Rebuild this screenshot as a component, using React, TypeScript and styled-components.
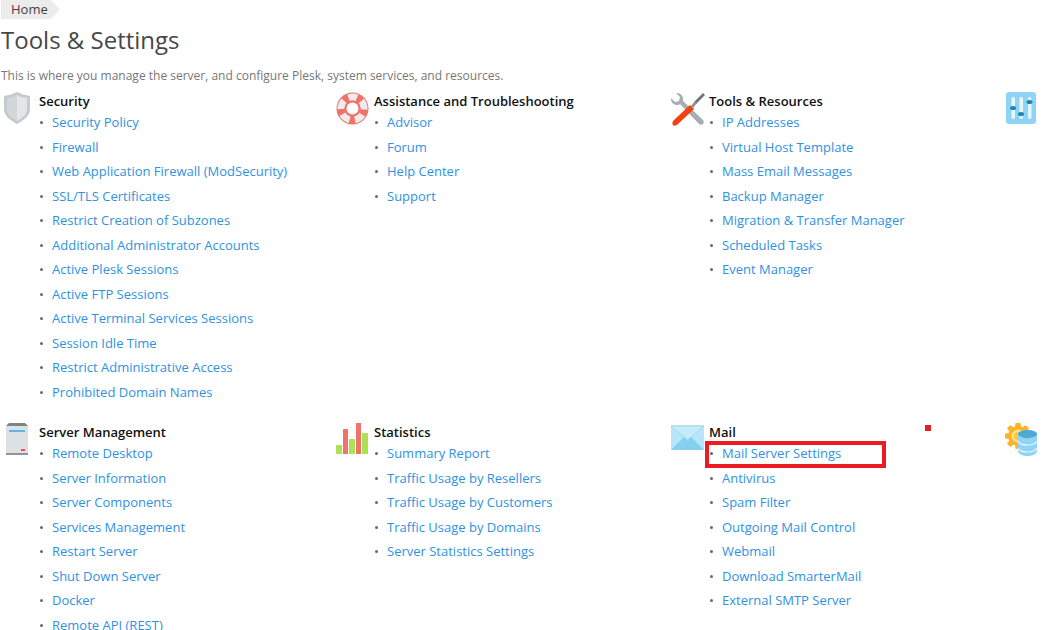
import React from "react";
import styled, { createGlobalStyle } from "styled-components";

const Global = createGlobalStyle`
  html, body { margin: 0; padding: 0; background: #fff; height: 630px; overflow: hidden; }
  body { font-family: "Open Sans", "Liberation Sans", sans-serif; font-size: 13px; }
`;
const Page = styled.div`position: relative; width: 1044px; height: 630px; overflow: hidden;`;
const Crumb = styled.div`
  box-sizing: border-box; width: 60px; height: 19px; margin-left: 1px; padding-left: 10px;
  background: #ececec; clip-path: polygon(0 0, 50px 0, 59px 9.5px, 50px 19px, 0 19px);
  font-size: 13px; line-height: 19px; color: #4a3f3f;
`;
const Title = styled.h1`
  margin: 3px 0 0 1px; font-size: 24px; font-weight: 400; line-height: 36px; color: #474747;
`;
const Desc = styled.p`
  margin: 9px 0 0 1px; font-size: 12px; line-height: 18px; color: #777;
`;
const Grid = styled.div`
  display: grid; grid-template-columns: repeat(4, 335px); row-gap: 18px; margin-top: 6px;
`;
const Section = styled.section`display: flex; align-items: flex-start;`;
const IconBox = styled.div<{ $left: number; $top?: number }>`
  width: 39px; flex: none; height: 40px; box-sizing: border-box;
  padding: ${(p) => p.$top ?? 1}px 0 0 ${(p) => p.$left}px;
  svg { display: block; overflow: visible; }
`;
const Body = styled.div`min-width: 0;`;
const Heading = styled.h2`
  margin: 0; font-size: 13px; font-weight: 600; line-height: 20px; color: #111;
`;
const List = styled.ul`margin: -1px 0 0; padding: 0; list-style: none;`;
const Item = styled.li`
  display: flex; height: 24.5px; line-height: 24.5px; white-space: nowrap;
  &::before { content: ""; width: 3px; height: 3px; margin: 11px 9px 0 1px; border-radius: 50%; background: #667; flex: none; }
`;
const LinkText = styled.a`font-size: 13px; color: #2f92e0; text-decoration: none;`;
const Highlight = styled.div`
  position: absolute; left: 705px; top: 441px; width: 181px; height: 27px;
  box-sizing: border-box; border: 4px solid #ed1c24;
`;
const Dot = styled.div`
  position: absolute; left: 925px; top: 425px; width: 6px; height: 6px; background: #ed1c24;
`;

const Shield = () => (
  <svg width="30" height="34" viewBox="0 0 30 34">
    <path d="M2 4C7 3 11 2 15 0c4 2 8 3 13 4v13c0 7-6 11-13 15C8 28 2 24 2 17z" fill="#c4cacd" />
    <path d="M15 3c3 2 7 2 10 3v11c0 6-5 9-10 12z" fill="#e2e6e9" />
    <path d="M15 3c-3 2-7 2-10 3v11c0 6 5 9 10 12z" fill="#d2d7da" />
  </svg>
);
const Ring = () => (
  <svg width="33" height="33" viewBox="0 0 33 33">
    <circle cx="16.5" cy="16.5" r="16" fill="#f0736a" />
    <circle cx="16.5" cy="16.5" r="11.5" fill="none" stroke="#ececec" strokeWidth="7" strokeDasharray="9 5.45" strokeDashoffset="4.5" transform="rotate(-90 16.5 16.5)" />
    <circle cx="16.5" cy="16.5" r="8" fill="#f0736a" />
    <circle cx="16.5" cy="16.5" r="6" fill="#fff" />
  </svg>
);
const Tools = () => (
  <svg width="34" height="34" viewBox="0 0 34 34">
    <path d="M6 1l-1 0 4 4-1 4-4 1-4-4C0 10 2 13 6 13c1 0 2 0 3-1l19 20c1 1 3 1 4 0s1-3 0-4L12 9c1-4-2-8-6-8z" fill="#a7aeb2" />
    <path d="M32 1l2 2-9 9-2-2z" fill="#6c7378" />
    <path d="M24 9l2 2-4 5-2-2z" fill="#8b9296" />
    <path d="M19 13l4 4L7 32c-2 2-4 2-5 1s-1-3 1-5z" fill="#f0420f" />
  </svg>
);
const Sliders = () => (
  <svg width="30" height="32" viewBox="0 0 30 32">
    <rect width="30" height="32" rx="3" fill="#8fd4f4" />
    <rect x="5.5" y="5" width="3.5" height="22" rx="1.7" fill="#e6f6fd" />
    <rect x="13.5" y="5" width="3.5" height="22" rx="1.7" fill="#e6f6fd" />
    <rect x="22" y="5" width="3.5" height="22" rx="1.7" fill="#e6f6fd" />
    <ellipse cx="7" cy="16" rx="3" ry="2" fill="#1a86b8" />
    <ellipse cx="15" cy="22" rx="3" ry="2" fill="#1a86b8" />
    <ellipse cx="23.5" cy="10" rx="3" ry="2" fill="#1a86b8" />
  </svg>
);
const Server = () => (
  <svg width="22" height="32" viewBox="0 0 22 32">
    <path d="M3 0h16l3 3v29H0V3z" fill="#dde1e4" />
    <path d="M3 0h16l3 3H0z" fill="#7d8488" />
    <rect y="30" width="22" height="2" fill="#8f969a" />
    <rect x="3" y="7" width="16" height="2" fill="#5bb8e8" />
    <rect x="15" y="26" width="4" height="2" fill="#f0504a" />
  </svg>
);
const Chart = () => (
  <svg width="33" height="32" viewBox="0 0 33 32">
    <rect x="0" y="22" width="6" height="9" rx="0.5" fill="#aee053" />
    <rect x="7" y="6" width="5" height="25" rx="0.5" fill="#f0736a" />
    <rect x="13" y="16" width="6" height="15" rx="0.5" fill="#aee053" />
    <rect x="20" y="0" width="5" height="31" rx="0.5" fill="#f0736a" />
    <rect x="26" y="10" width="6" height="21" rx="0.5" fill="#aee053" />
  </svg>
);
const Envelope = () => (
  <svg width="33" height="25" viewBox="0 0 33 25">
    <rect width="33" height="25" rx="1.5" fill="#b7e5f9" />
    <path d="M0 25l13-13h7l13 13z" fill="#83d0f1" />
    <path d="M0 1l16.5 14L33 1z" fill="#c5ebfb" stroke="#9cc9de" strokeWidth="0.5" />
  </svg>
);
const GearDb = () => (
  <svg width="38" height="34" viewBox="0 0 38 34">
    <g fill="#ffb326">
      {[0, 45, 90, 135, 180, 225, 270, 315].map((a) => (
        <rect key={a} x="10.5" y="0" width="5" height="26" rx="1" transform={`rotate(${a} 13 13)`} />
      ))}
      <circle cx="13" cy="13" r="10" />
    </g>
    <circle cx="13" cy="13" r="6.5" fill="#ffe08a" />
    <circle cx="13" cy="13" r="4" fill="#ffc53d" />
    <path d="M13 11c0-2 5-4 9.5-4S32 9 32 11v17c0 3-5 5-9.5 5S13 31 13 28z" fill="#8fd4f4" />
    <ellipse cx="22.5" cy="11" rx="9.5" ry="4" fill="#4ea9d2" />
    <path d="M13 18c1 3 6 4 9.5 4s8-1 9.5-4M13 25c1 3 6 4 9.5 4s8-1 9.5-4" fill="none" stroke="#e6f6fd" strokeWidth="1.2" />
  </svg>
);

type Sec = { icon: React.ReactNode; left: number; top?: number; title?: string; links?: string[] };
const sections: Sec[] = [
  { icon: <Shield />, left: 2, title: "Security", links: ["Security Policy", "Firewall", "Web Application Firewall (ModSecurity)", "SSL/TLS Certificates", "Restrict Creation of Subzones", "Additional Administrator Accounts", "Active Plesk Sessions", "Active FTP Sessions", "Active Terminal Services Sessions", "Session Idle Time", "Restrict Administrative Access", "Prohibited Domain Names"] },
  { icon: <Ring />, left: 1, title: "Assistance and Troubleshooting", links: ["Advisor", "Forum", "Help Center", "Support"] },
  { icon: <Tools />, left: 1, title: "Tools & Resources", links: ["IP Addresses", "Virtual Host Template", "Mass Email Messages", "Backup Manager", "Migration & Transfer Manager", "Scheduled Tasks", "Event Manager"] },
  { icon: <Sliders />, left: 1 },
  { icon: <Server />, left: 6, title: "Server Management", links: ["Remote Desktop", "Server Information", "Server Components", "Services Management", "Restart Server", "Shut Down Server", "Docker", "Remote API (REST)"] },
  { icon: <Chart />, left: 1, title: "Statistics", links: ["Summary Report", "Traffic Usage by Resellers", "Traffic Usage by Customers", "Traffic Usage by Domains", "Server Statistics Settings"] },
  { icon: <Envelope />, left: 1, top: 3, title: "Mail", links: ["Mail Server Settings", "Antivirus", "Spam Filter", "Outgoing Mail Control", "Webmail", "Download SmarterMail", "External SMTP Server"] },
  { icon: <GearDb />, left: 0 },
];

export default function App() {
  return (
    <Page>
      <Global />
      <Crumb>Home</Crumb>
      <Title>Tools &amp; Settings</Title>
      <Desc>This is where you manage the server, and configure Plesk, system services, and resources.</Desc>
      <Grid>
        {sections.map((s, i) => (
          <Section key={i}>
            <IconBox $left={s.left} $top={s.top}>{s.icon}</IconBox>
            {s.title && (
              <Body>
                <Heading>{s.title}</Heading>
                <List>
                  {s.links!.map((l) => (
                    <Item key={l}><LinkText href="#">{l}</LinkText></Item>
                  ))}
                </List>
              </Body>
            )}
          </Section>
        ))}
      </Grid>
      <Highlight />
      <Dot />
    </Page>
  );
}
